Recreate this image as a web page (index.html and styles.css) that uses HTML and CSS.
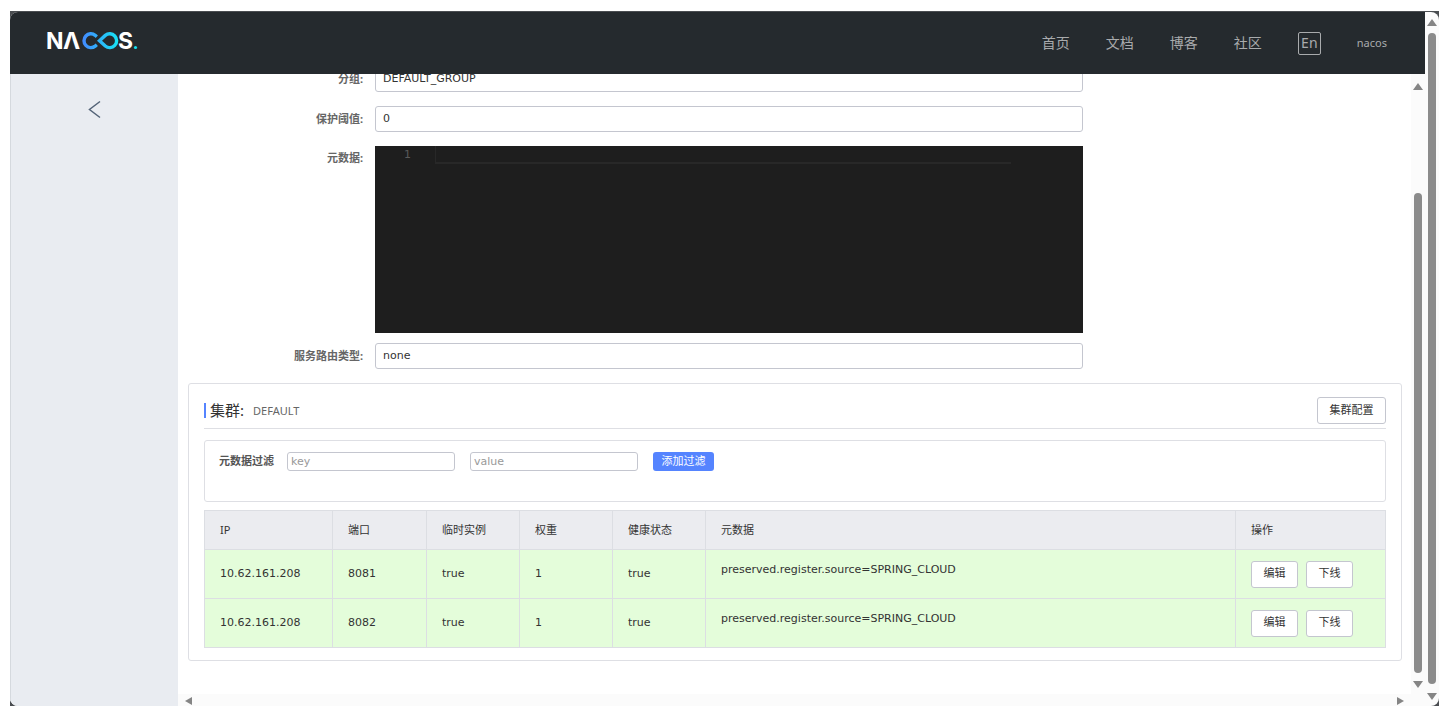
FILE: index.html
```
<!DOCTYPE html>
<html lang="zh-CN">
<head>
<meta charset="utf-8">
<title>Nacos</title>
<link rel="stylesheet" href="styles.css">
</head>
<body>
<div class="window">
  <div class="app">
    <header class="topbar">
      <a class="logo" href="#" aria-label="Nacos">
        <svg width="96" height="32" viewBox="-2 -6 96 32">
          <defs>
            <linearGradient id="loop" gradientUnits="userSpaceOnUse" x1="34" x2="72" y1="0" y2="0">
              <stop offset="0" stop-color="#4586ff"/>
              <stop offset="1" stop-color="#15e6f5"/>
            </linearGradient>
          </defs>
          <text class="logo-text" x="-1" y="18">N</text>
          <text class="logo-text" x="16" y="18">Λ</text>
          <path d="M49.800 5.700L48.200 4.300A6.900 6.900 0 1 0 48.200 15.100L49.800 13.700" fill="none" stroke="url(#loop)" stroke-width="3.400"/>
          <path d="M52.500 9.700L58.300 4.400A6.900 6.900 0 1 1 58.300 15Z" fill="none" stroke="url(#loop)" stroke-width="3.400"/>
          <text class="logo-text" x="71" y="18">S</text>
          <circle cx="88.500" cy="16.500" r="1.600" fill="#15e0f0"/>
        </svg>
      </a>
      <nav class="nav">
        <a href="#">首页</a>
        <a href="#">文档</a>
        <a href="#">博客</a>
        <a href="#">社区</a>
        <button class="lang" type="button">En</button>
        <a class="user" href="#">nacos</a>
      </nav>
    </header>
    <div class="body">
      <aside class="sidebar">
        <button class="back" type="button" aria-label="返回">
          <svg width="14" height="20" viewBox="0 0 14 20"><path d="M12 1.500L1.500 9.500L12 17.500" fill="none" stroke="#546478" stroke-width="1.500"/></svg>
        </button>
      </aside>
      <div class="pane">
        <main class="content">
          <form class="form">
            <div class="row"><label for="group">分组:</label><input id="group" class="field" type="text" value="DEFAULT_GROUP"></div>
            <div class="row"><label for="threshold">保护阈值:</label><input id="threshold" class="field" type="text" value="0"></div>
            <div class="row row-editor"><label for="meta">元数据:</label>
              <div class="editor"><span class="line-no">1</span><textarea id="meta" class="code" rows="1"></textarea></div>
            </div>
            <div class="row"><label for="route">服务路由类型:</label><input id="route" class="field" type="text" value="none"></div>
          </form>
          <section class="card">
            <div class="card-head">
              <h2>集群:</h2><span class="cluster">DEFAULT</span>
              <button class="btn" type="button">集群配置</button>
            </div>
            <form class="filter">
              <label for="key">元数据过滤</label>
              <input id="key" class="small" type="text" placeholder="key">
              <input class="small" type="text" placeholder="value" aria-label="value">
              <button class="add" type="button">添加过滤</button>
            </form>
            <table class="table">
              <colgroup><col class="c-ip"><col class="c-port"><col class="c-s"><col class="c-s"><col class="c-s"><col><col class="c-op"></colgroup>
              <thead><tr><th>IP</th><th>端口</th><th>临时实例</th><th>权重</th><th>健康状态</th><th>元数据</th><th>操作</th></tr></thead>
              <tbody>
                <tr><td>10.62.161.208</td><td>8081</td><td>true</td><td>1</td><td>true</td><td class="meta">preserved.register.source=SPRING_CLOUD</td><td><div class="ops"><button class="btn" type="button">编辑</button><button class="btn" type="button">下线</button></div></td></tr>
                <tr><td>10.62.161.208</td><td>8082</td><td>true</td><td>1</td><td>true</td><td class="meta">preserved.register.source=SPRING_CLOUD</td><td><div class="ops"><button class="btn" type="button">编辑</button><button class="btn" type="button">下线</button></div></td></tr>
              </tbody>
            </table>
          </section>
        </main>
        <div class="vbar inner"><i class="up"></i><i class="thumb"></i><i class="down"></i></div>
        <div class="hbar"><i class="left"></i><i class="right"></i></div>
      </div>
    </div>
  </div>
  <div class="vbar outer"><i class="up"></i><i class="thumb"></i><i class="down"></i></div>
</div>
</body>
</html>
```
FILE: styles.css
```
* { box-sizing: border-box; }
body {
  margin: 0;
  height: 100vh;
  padding: 11px 7px 10px 10px;
  background: #fff;
  color: #333;
  font: 11px/16px "DejaVu Sans", "Noto Sans CJK SC", sans-serif;
}
button, input, textarea { font: inherit; color: inherit; margin: 0; }
a { color: inherit; text-decoration: none; }

.window {
  display: flex;
  height: 100%;
  border-top: 1px solid #4a4d51;
  background: #4a4d51;
}
.app {
  flex: 1;
  min-width: 0;
  display: flex;
  flex-direction: column;
  overflow: hidden;
  border-radius: 8px 0 0 8px;
  background: #fff;
}

.topbar {
  flex: none;
  height: 62px;
  display: flex;
  align-items: center;
  justify-content: space-between;
  padding: 0 38px 0 35px;
  background: #252a2e;
  color: #a9abad;
}
.logo { display: flex; padding-bottom: 4px; }
.logo-text { font: 700 23px Inter, sans-serif; fill: #fff; }
.nav {
  display: flex;
  align-items: center;
  gap: 36px;
  font: 14px/20px "Noto Sans", "Noto Sans CJK SC", sans-serif;
}
.lang {
  width: 23px;
  height: 23px;
  padding: 0;
  border: 1px solid #a9abad;
  border-radius: 2px;
  background: none;
  line-height: 20px;
}
.user { font-size: 11px; }

.body { flex: 1; min-height: 0; display: flex; }
.sidebar {
  flex: none;
  width: 168px;
  padding-top: 26px;
  border-left: 1px solid #d5d9de;
  background: #e9ecf1;
  text-align: center;
}
.back { padding: 0; border: 0; background: none; line-height: 0; }

.pane {
  flex: 1;
  min-width: 0;
  display: grid;
  grid-template-columns: 1fr 14px;
  grid-template-rows: 1fr 12px;
}
.content { min-width: 0; overflow: hidden; padding: 0 9px 0 10px; }

.form { display: flex; flex-direction: column; gap: 14px; margin: -8px 0 14px; }
.row { display: flex; align-items: center; }
.row label {
  flex: none;
  width: 187px;
  padding-right: 12px;
  text-align: right;
  font: 700 11px/16px "Noto Sans", "Noto Sans CJK SC", sans-serif;
  color: #666;
}
.field, .editor { flex: 0 0 58.33%; }
.field {
  height: 26px;
  padding: 0 7px 1px;
  border: 1px solid #c4c6cf;
  border-radius: 3px;
  background: #fff;
}
.row-editor { align-items: flex-start; margin-bottom: -4px; }
.row-editor label { margin-top: 4px; }
.editor {
  display: flex;
  align-items: flex-start;
  height: 187px;
  padding-right: 72px;
  background: #1e1e1e;
}
.line-no { width: 60px; padding-right: 24px; text-align: right; color: #5a5a5a; line-height: 18px; }
.code {
  flex: 1;
  height: 18px;
  padding: 0;
  resize: none;
  overflow: hidden;
  border: 1px solid #282828;
  border-width: 0 0 2px 1px;
  background: none;
  color: #d4d4d4;
}

.card { padding: 13px 15px 12px; border: 1px solid #dedfe4; border-radius: 3px; }
.card-head {
  display: flex;
  align-items: center;
  height: 32px;
  padding-bottom: 4px;
  margin-bottom: 11px;
  border-bottom: 1px solid #dedfe4;
}
.card-head h2 {
  margin: 0;
  padding-left: 4px;
  border-left: 2px solid #5584ff;
  font: 400 15px/15px "Noto Sans", "Noto Sans CJK SC", sans-serif;
}
.cluster { margin-left: 9px; font: 11px/16px "Noto Sans", sans-serif; color: #666; }
.card-head .btn { margin-left: auto; width: 69px; }
.btn {
  height: 27px;
  padding: 0;
  border: 1px solid #c4c6cf;
  border-radius: 3px;
  background: #fff;
}
.filter {
  display: flex;
  align-items: flex-start;
  height: 62px;
  padding: 11px 14px;
  margin-bottom: 8px;
  border: 1px solid #dedfe4;
  border-radius: 3px;
}
.filter label { margin: 2px 13px 0 0; font-weight: 700; color: #555; }
.small {
  width: 168px;
  height: 19px;
  margin-right: 15px;
  padding: 0 3px;
  border: 1px solid #c4c6cf;
  border-radius: 3px;
}
.small::placeholder { color: #999; }
.add {
  width: 61px;
  height: 19px;
  padding: 0;
  border: 0;
  border-radius: 3px;
  background: #5584ff;
  color: #fff;
}

.table { width: 100%; table-layout: fixed; border-collapse: collapse; }
.c-ip { width: 128px; }
.c-port { width: 94px; }
.c-s { width: 93px; }
.c-op { width: 150px; }
.table th, .table td { padding: 0 15px; border: 1px solid #dcdee3; text-align: left; }
.table th { height: 39px; background: #ebecf0; font: 11px/16px "Noto Sans", "Noto Sans CJK SC", sans-serif; }
.table td { height: 49px; background: #e4fdda; }
.table .meta { padding-bottom: 9px; }
.ops { display: flex; gap: 8px; }
.ops .btn { width: 47px; }

.vbar { display: flex; flex-direction: column; align-items: center; background: #fbfbfb; }
.vbar .thumb { flex: 1; width: 8px; border-radius: 4px; background: #8b8b8b; }
.up, .down { border: 5px solid transparent; }
.up { border-top: 0; border-bottom: 7px solid #858585; }
.down { border-bottom: 0; border-top: 7px solid #858585; }
.inner { padding: 9px 0 6px; }
.inner .up { margin-bottom: 103px; }
.inner .down { margin-top: 8px; }
.outer { flex: none; width: 14px; padding: 7px 0 6px; border-radius: 0 8px 8px 0; }
.outer .up { margin-bottom: 7px; }
.outer .down { margin-top: 9px; }
.hbar {
  grid-column: 1 / 3;
  display: flex;
  justify-content: space-between;
  align-items: center;
  padding: 2px 21px 0 7px;
  background: #fbfbfb;
}
.left, .right { border: 4px solid transparent; }
.left { border-left: 0; border-right: 7px solid #858585; }
.right { border-right: 0; border-left: 7px solid #858585; }
```
